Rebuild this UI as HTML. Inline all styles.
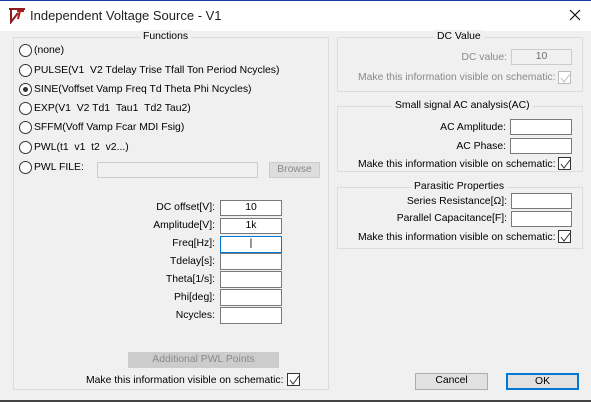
<!DOCTYPE html>
<html><head><style>
*{margin:0;padding:0;box-sizing:border-box}
body{width:591px;height:402px;background:#f0f0f0;font-family:"Liberation Sans",sans-serif;font-size:10.4px;color:#000;position:relative;overflow:hidden}
.a{position:absolute;white-space:nowrap}
.title{left:0;top:0;width:591px;height:31px;background:#fff;border-top:1px solid #1a3aa8}
.grp{position:absolute;border:1px solid #dcdcdc}
.gt{position:absolute;background:#f0f0f0;padding:0 3px;top:-8px;line-height:14px}
.in{position:absolute;background:#fff;border:1px solid #7a7a7a;text-align:center;line-height:14px}
.dis{background:#f0f0f0;border-color:#ccc;color:#6d6d6d}
.r{position:absolute;width:13px;height:13px;border:1px solid #333;border-radius:50%;background:#fff}
.r.on::after{content:"";position:absolute;left:3px;top:3px;width:5px;height:5px;border-radius:50%;background:#333}
.lbl{position:absolute;text-align:right;line-height:14px}
.cb{position:absolute;width:13px;height:13px;border:1px solid #333;background:#fff}
.cb svg{position:absolute;left:1px;top:1px}
.btn{position:absolute;background:#e1e1e1;border:1px solid #adadad;text-align:center;line-height:14px}
</style></head><body>
<div class="a title"></div>
<svg class="a" style="left:8px;top:8px" width="18" height="16"><path d="M1 1 L17 1 M3 1 L3 14 L10 5" stroke="#8a1e1e" stroke-width="2" fill="none"/><path d="M9 3 L16 3 M12 3 L10 11" stroke="#b01c1c" stroke-width="2" fill="none"/></svg>
<div class="a" style="left:30px;top:8px;font-size:13px;color:#222">Independent Voltage Source - V1</div>
<svg class="a" style="left:569px;top:9px" width="12" height="12"><path d="M1 1L11 11M11 1L1 11" stroke="#111" stroke-width="1.2"/></svg>

<div class="grp" style="left:13px;top:37px;width:316px;height:353px"><div class="gt" style="left:126px">Functions</div></div>
<div class="r" style="left:19px;top:44px"></div><div class="a" style="left:34px;top:45px">(none)</div>
<div class="r" style="left:19px;top:64px"></div><div class="a" style="left:34px;top:65px">PULSE(V1 &nbsp;V2 Tdelay Trise Tfall Ton Period Ncycles)</div>
<div class="r on" style="left:19px;top:83px"></div><div class="a" style="left:34px;top:84px">SINE(Voffset Vamp Freq Td Theta Phi Ncycles)</div>
<div class="r" style="left:19px;top:102px"></div><div class="a" style="left:34px;top:103px">EXP(V1 &nbsp;V2 Td1 &nbsp;Tau1 &nbsp;Td2 Tau2)</div>
<div class="r" style="left:19px;top:121px"></div><div class="a" style="left:34px;top:122px">SFFM(Voff Vamp Fcar MDI Fsig)</div>
<div class="r" style="left:19px;top:141px"></div><div class="a" style="left:34px;top:142px">PWL(t1 &nbsp;v1 &nbsp;t2 &nbsp;v2...)</div>
<div class="r" style="left:19px;top:161px"></div><div class="a" style="left:34px;top:162px">PWL FILE:</div>
<div class="in dis" style="left:97px;top:162px;width:161px;height:16px"></div>
<div class="btn" style="left:269px;top:162px;width:51px;height:16px;color:#8a8a8a;background:#ddd;border-color:#ccc">Browse</div>

<div class="lbl" style="left:100px;width:115px;top:201px">DC offset[V]:</div><div class="in" style="left:220px;top:200px;width:62px;height:16px">10</div>
<div class="lbl" style="left:100px;width:115px;top:219px">Amplitude[V]:</div><div class="in" style="left:220px;top:218px;width:62px;height:16px">1k</div>
<div class="lbl" style="left:100px;width:115px;top:237px">Freq[Hz]:</div><div class="in" style="left:220px;top:236px;width:62px;height:17px;border-color:#0078d7">|</div>
<div class="lbl" style="left:100px;width:115px;top:255px">Tdelay[s]:</div><div class="in" style="left:220px;top:253px;width:62px;height:17px"></div>
<div class="lbl" style="left:100px;width:115px;top:273px">Theta[1/s]:</div><div class="in" style="left:220px;top:271px;width:62px;height:17px"></div>
<div class="lbl" style="left:100px;width:115px;top:291px">Phi[deg]:</div><div class="in" style="left:220px;top:289px;width:62px;height:17px"></div>
<div class="lbl" style="left:100px;width:115px;top:309px">Ncycles:</div><div class="in" style="left:220px;top:307px;width:62px;height:17px"></div>
<div class="btn" style="left:128px;top:352px;width:151px;height:16px;color:#8a8a8a;background:#ccc;border-color:#ccc">Additional PWL Points</div>
<div class="a" style="left:86px;top:375px">Make this information visible on schematic:</div>
<div class="cb" style="left:287px;top:373px"><svg width="11" height="11"><path d="M1 5L4 9L10 1" stroke="#333" fill="none"/></svg></div>

<div class="grp" style="left:337px;top:37px;width:246px;height:55px"><div class="gt" style="left:96px">DC Value</div></div>
<div class="lbl" style="left:400px;width:107px;top:51px;color:#8a8a8a">DC value:</div><div class="in dis" style="left:511px;top:49px;width:61px;height:16px">10</div>
<div class="a" style="left:358px;top:72px;color:#8a8a8a">Make this information visible on schematic:</div>
<div class="cb" style="left:558px;top:71px;border-color:#bbb"><svg width="11" height="11"><path d="M1 5L4 9L10 1" stroke="#bbb" fill="none"/></svg></div>

<div class="grp" style="left:337px;top:106px;width:246px;height:66px"><div class="gt" style="left:54px">Small signal AC analysis(AC)</div></div>
<div class="lbl" style="left:400px;width:106px;top:121px">AC Amplitude:</div><div class="in" style="left:510px;top:119px;width:62px;height:16px"></div>
<div class="lbl" style="left:400px;width:106px;top:140px">AC Phase:</div><div class="in" style="left:510px;top:138px;width:62px;height:16px"></div>
<div class="a" style="left:358px;top:159px">Make this information visible on schematic:</div>
<div class="cb" style="left:558px;top:157px"><svg width="11" height="11"><path d="M1 5L4 9L10 1" stroke="#333" fill="none"/></svg></div>

<div class="grp" style="left:337px;top:187px;width:246px;height:62px"><div class="gt" style="left:73px">Parasitic Properties</div></div>
<div class="lbl" style="left:380px;width:127px;top:195px">Series Resistance[Ω]:</div><div class="in" style="left:511px;top:193px;width:61px;height:16px"></div>
<div class="lbl" style="left:380px;width:127px;top:212px">Parallel Capacitance[F]:</div><div class="in" style="left:511px;top:211px;width:61px;height:16px"></div>
<div class="a" style="left:358px;top:232px">Make this information visible on schematic:</div>
<div class="cb" style="left:558px;top:230px"><svg width="11" height="11"><path d="M1 5L4 9L10 1" stroke="#333" fill="none"/></svg></div>

<div class="btn" style="left:415px;top:373px;width:73px;height:17px">Cancel</div>
<div class="btn" style="left:506px;top:373px;width:73px;height:17px;border:2px solid #0078d7;line-height:13px">OK</div>
<div class="a" style="left:0;top:400px;width:591px;height:2px;background:#444"></div>
</body></html>
